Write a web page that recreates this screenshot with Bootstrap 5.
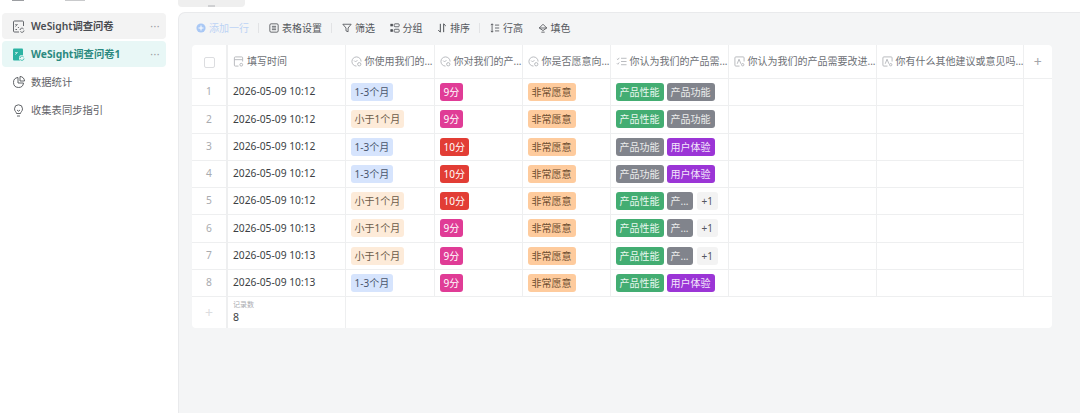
<!DOCTYPE html>
<html lang="zh">

<head>
    <meta charset="UTF-8">
    <meta name="viewport" content="width=device-width, initial-scale=1.0">
    <title>WeSight调查问卷1</title>

    <link href="https://cdn.jsdelivr.net/npm/bootstrap@5.3.0/dist/css/bootstrap.min.css" rel="stylesheet">

    <style>
        html, body {
            height: 413px;
            overflow: hidden;
        }

        body {
            background-color: #fff;
            color: #3c3f44;
            font-family: "Noto Sans", "Noto Sans CJK SC", sans-serif;
            font-size: 10.3px;
        }

        .side-bar {
            width: 178px;
            padding: 0 12px 0 2px;
        }

        .cut-row {
            height: 13px;
            padding-left: 10px;
        }

        .cut-bit {
            height: 1px;
            background-color: #c9cacc;
        }

        .cut-bit.is-icon {
            width: 12px;
            background-color: #9c9ea2;
        }

        .cut-bit.is-text {
            width: 20px;
            margin-left: 41px;
        }

        .side-item {
            height: 26px;
            margin-bottom: 2px;
            padding: 1px 6px 0 10px;
            border-radius: 4px;
            color: #5f6267;
        }

        .side-item svg {
            width: 13px;
            height: 13px;
            margin-right: 6px;
            flex: none;
        }

        .side-item.is-file {
            background-color: #f3f3f3;
            font-weight: 600;
            color: #4a4d52;
        }

        .side-item.is-active {
            background-color: #e8f7f6;
            font-weight: 700;
            color: #2c8a80;
        }

        .side-item .more-dots {
            margin-left: auto;
            color: #9a9da2;
            letter-spacing: .5px;
            font-weight: 400;
            line-height: 1;
        }

        .side-link {
            margin-top: 2px;
        }

        .main-area {
            width: 902px;
        }

        .tab-stub {
            width: 67px;
            height: 7px;
            background-color: #efefef;
            border-radius: 0 0 4px 4px;
        }

        .tab-stub span {
            width: 7px;
            height: 2px;
            background-color: #cfd0d2;
        }

        .sheet-panel {
            margin-top: 5px;
            padding: 0 28px 0 13px;
            height: 401px;
            background-color: #f4f5f6;
            border-top: 1px solid #e9eaec;
            border-left: 1px solid #e9eaec;
            border-top-left-radius: 7px;
        }

        .tool-bar {
            height: 32px;
            padding: 0 0 2px 4px;
            color: #55585d;
            font-size: 10px;
        }

        .tool-item svg {
            width: 10px;
            height: 10px;
            margin-right: 3px;
            flex: none;
        }

        .tool-item + .tool-item {
            margin-left: 14.500px;
        }

        .tool-item.is-add {
            color: #bcd3f5;
        }

        .tool-sep {
            width: 1px;
            height: 10px;
            margin: 0 10px 0 9px;
            background-color: #e2e3e5;
        }

        .grid-box {
            background-color: #fff;
            border-radius: 4px;
            width: 860px;
            overflow: hidden;
        }

        .grid-table {
            table-layout: fixed;
            width: 860px;
            margin: 0;
            border-collapse: collapse;
            font-size: 10.26px;
        }

        .grid-table th,
        .grid-table td {
            padding: 0 5px;
            height: 27.25px;
            border: 1px solid #eeeff0;
            color: #3c3f44;
            font-weight: 400;
            white-space: nowrap;
            overflow: hidden;
            vertical-align: middle;
            box-shadow: none;
        }

        .grid-table th {
            height: 33.5px;
            color: #6d7075;
            font-size: 10px;
        }

        .grid-table tr > :first-child {
            border-left: 0;
            border-right-width: 2px;
            text-align: center;
            color: #a9abaf;
        }

        .grid-table tr:first-child > * {
            border-top: 0;
        }

        .grid-table tr > :last-child {
            border-right: 0;
        }

        .no-line {
            border: 0 !important;
        }

        .head-inner svg {
            width: 11px;
            height: 11px;
            margin-right: 3px;
            flex: none;
        }

        .check-box {
            display: inline-block;
            width: 11px;
            height: 11px;
            border: 1px solid #dcdde0;
            border-radius: 2px;
            vertical-align: middle;
        }

        .add-col {
            text-align: center;
            font-size: 14px !important;
            color: #a4a6aa !important;
        }

        .add-row {
            font-size: 14px;
            color: #dcdde0 !important;
        }

        .tag-pill {
            display: inline-block;
            height: 18px;
            line-height: 18px;
            padding: 0 4px;
            border-radius: 3px;
            margin-right: 3px;
            font-size: 10px;
            vertical-align: middle;
        }

        .tag-blue { background-color: #d6e4fd; color: #49566c; }
        .tag-cream { background-color: #fdebd9; color: #6a5a48; }
        .tag-pink { background-color: #e03c96; color: #fff; }
        .tag-red { background-color: #e23d35; color: #fff; }
        .tag-peach { background-color: #fecb9d; color: #6e4e30; }
        .tag-green { background-color: #43ad72; color: #e9f7ef; }
        .tag-grey { background-color: #81848c; color: #eceded; }
        .tag-purple { background-color: #9b35d6; color: #f3e6fb; }
        .tag-more { background-color: #f3f3f3; color: #55585e; padding: 0 5px; margin-left: 1px; }

        .foot-label {
            font-size: 7px;
            color: #a9abaf;
            line-height: 10px;
        }

        .foot-value {
            font-size: 10.500px;
            line-height: 14px;
        }

        .foot-row td {
            height: 31px;
            border-bottom: 0;
        }
    </style>
</head>

<body>
    <div class="d-flex">
        <!-- left list -->
        <div class="side-bar flex-shrink-0">
            <div class="cut-row d-flex align-items-start">
                <span class="cut-bit is-icon"></span>
                <span class="cut-bit is-text"></span>
            </div>
            <div class="side-item is-file d-flex align-items-center">
                <svg viewBox="0 0 13 13" fill="none" stroke="#55585e" stroke-width=".9"><path d="M11.500 6V2a1 1 0 0 0-1-1h-8a1 1 0 0 0-1 1v9a1 1 0 0 0 1 1H7"/><path d="M3.500 6.500l2-2.500M3.500 4l.8 1M6 7l.8 1M5 9.500H3.500"/><path d="M8 10a2 2 0 0 1 3.600-1M12 10.500a2 2 0 0 1-3.600 1"/></svg>
                <span>WeSight调查问卷</span>
                <span class="more-dots">···</span>
            </div>
            <div class="side-item is-active d-flex align-items-center">
                <svg viewBox="0 0 13 13"><rect x="1" y="0.500" width="10" height="12" rx="1" fill="#2bb3a3"/><path d="M3.500 6.500l2-2.500M3.500 4l.8 1" stroke="#fff" stroke-width=".9" fill="none"/><circle cx="10" cy="10" r="3" fill="#e8f7f6"/><path d="M8 10a2 2 0 0 1 3.600-1M12 10.500a2 2 0 0 1-3.600 1" stroke="#2bb3a3" stroke-width=".9" fill="none"/></svg>
                <span>WeSight调查问卷1</span>
                <span class="more-dots">···</span>
            </div>
            <div class="side-item side-link d-flex align-items-center">
                <svg viewBox="0 0 13 13" fill="none" stroke="#4f5257" stroke-width=".9"><path d="M6 1.500a5 5 0 1 0 5.500 5.500H6z"/><path d="M8 .5a4.500 4.500 0 0 1 4.500 4.500H8z"/></svg>
                <span>数据统计</span>
            </div>
            <div class="side-item d-flex align-items-center">
                <svg viewBox="0 0 13 13" fill="none" stroke="#4f5257" stroke-width=".9"><path d="M4.500 9.500c0-1.500-2-2.200-2-4.700a4 4 0 0 1 8 0c0 2.500-2 3.200-2 4.700z"/><path d="M5 12h3M5 6l1.500 1.200L8 6"/></svg>
                <span>收集表同步指引</span>
            </div>
        </div>

        <!-- sheet -->
        <div class="main-area">
            <div class="tab-stub d-flex justify-content-center align-items-end"><span></span></div>
            <div class="sheet-panel">
                <div class="tool-bar d-flex align-items-center">
                    <div class="tool-item is-add d-flex align-items-center">
                        <svg viewBox="0 0 12 12"><circle cx="6" cy="6" r="5.500" fill="#a9c8f5"/><path d="M6 3v6M3 6h6" stroke="#fff" stroke-width="1.200"/></svg>添加一行
                    </div>
                    <span class="tool-sep"></span>
                    <div class="tool-item d-flex align-items-center">
                        <svg viewBox="0 0 12 12" fill="none" stroke="#4f5257"><rect x="1" y="1" width="10" height="10" rx="1.500"/><path d="M3.500 4h5M3.500 6h5M3.500 8h5"/></svg>表格设置
                    </div>
                    <span class="tool-sep"></span>
                    <div class="tool-item d-flex align-items-center">
                        <svg viewBox="0 0 12 12" fill="none" stroke="#4f5257"><path d="M1 1.500h10L7.300 6v4.500l-2.500-1V6z"/></svg>筛选
                    </div>
                    <div class="tool-item d-flex align-items-center">
                        <svg viewBox="0 0 12 12" fill="none" stroke="#4f5257"><rect x="1" y="1.500" width="2" height="2" fill="#4f5257"/><rect x="1" y="8" width="2" height="2" fill="#4f5257"/><rect x="5" y="1" width="6" height="3.500" rx="1"/><rect x="5" y="7.500" width="6" height="3.500" rx="1"/></svg>分组
                    </div>
                    <div class="tool-item d-flex align-items-center">
                        <svg viewBox="0 0 12 12" fill="none" stroke="#4f5257" stroke-width="1.200"><path d="M4 1v10L1.500 8.500M8 11V1l2.500 2.500"/></svg>排序
                    </div>
                    <span class="tool-sep"></span>
                    <div class="tool-item d-flex align-items-center">
                        <svg viewBox="0 0 12 12" fill="none" stroke="#4f5257"><path d="M2.500 1v10M1 2.500L2.500 1 4 2.500M1 9.500L2.500 11 4 9.500M6 2.500h5M6 6h5M6 9.500h5"/></svg>行高
                    </div>
                    <div class="tool-item d-flex align-items-center">
                        <svg viewBox="0 0 12 12" fill="none" stroke="#4f5257"><path d="M6 1.500L10.500 6 6 9 1.500 6z"/><path d="M1.500 6h9M4 11h4"/></svg>填色
                    </div>
                </div>

                <div class="grid-box">
                    <table class="table grid-table" id="grid">
                        <colgroup>
                            <col style="width:35px"><col style="width:118px"><col style="width:89px"><col style="width:88px"><col style="width:88px"><col style="width:118px"><col style="width:148px"><col style="width:147px"><col style="width:29px">
                        </colgroup>
                        <thead id="gridHead"></thead>
                        <tbody id="gridBody"></tbody>
                    </table>
                </div>
            </div>
        </div>
    </div>

    <script src="https://cdn.jsdelivr.net/npm/bootstrap@5.3.0/dist/js/bootstrap.bundle.min.js"></script>
    <script>
        var ico = {
            date: '<svg viewBox="0 0 12 12" fill="none" stroke="#b4b6ba"><path d="M10.500 6V2a1 1 0 0 0-1-1h-7a1 1 0 0 0-1 1v8a1 1 0 0 0 1 1H6M1.500 4h9"/><circle cx="9" cy="9.500" r="1.500"/></svg>',
            one: '<svg viewBox="0 0 12 12" fill="none" stroke="#b4b6ba"><path d="M11 6a5 5 0 1 0-5 5"/><path d="M3.500 5l1.500 1.500L7 4.500"/><circle cx="9" cy="9" r="1.800"/></svg>',
            many: '<svg viewBox="0 0 12 12" fill="none" stroke="#b4b6ba"><path d="M1 3l1 1 1.500-2M1 8l1 1 1.500-2M5.500 2.500h6M5.500 6h6M5.500 9.500h6"/></svg>',
            text: '<svg viewBox="0 0 12 12" fill="none" stroke="#b4b6ba"><path d="M11 6V2a1 1 0 0 0-1-1H2a1 1 0 0 0-1 1v8a1 1 0 0 0 1 1h4"/><path d="M3.500 8.500L5.500 3.500 7.500 8.500"/><circle cx="9.500" cy="9.500" r="1.300"/></svg>'
        };

        var heads = [
            ['date', '填写时间'],
            ['one', '你使用我们的...'],
            ['one', '你对我们的产...'],
            ['one', '你是否愿意向...'],
            ['many', '你认为我们的产品需...'],
            ['text', '你认为我们的产品需要改进...'],
            ['text', '你有什么其他建议或意见吗...']
        ];

        var tagA = ['产品性能', 'tag-green'];
        var tagB = ['产品功能', 'tag-grey'];
        var tagB2 = ['产...', 'tag-grey'];
        var tagC = ['用户体验', 'tag-purple'];
        var more = ['+1', 'tag-more'];
        var m1 = ['1-3个月', 'tag-blue'];
        var m2 = ['小于1个月', 'tag-cream'];
        var s9 = ['9分', 'tag-pink'];
        var s10 = ['10分', 'tag-red'];

        var rows = [
            ['10:12', m1, s9, [tagA, tagB]],
            ['10:12', m2, s9, [tagA, tagB]],
            ['10:12', m1, s10, [tagB, tagC]],
            ['10:12', m1, s10, [tagB, tagC]],
            ['10:12', m2, s10, [tagA, tagB2, more]],
            ['10:13', m2, s9, [tagA, tagB2, more]],
            ['10:13', m2, s9, [tagA, tagB2, more]],
            ['10:13', m1, s9, [tagA, tagC]]
        ];

        function tag(t) {
            return '<span class="tag-pill ' + t[1] + '">' + t[0] + '</span>';
        }

        var headHtml = '<tr><th><span class="check-box"></span></th>';
        heads.forEach(function (h) {
            headHtml += '<th><div class="head-inner d-flex align-items-center">' + ico[h[0]] + '<span>' + h[1] + '</span></div></th>';
        });
        headHtml += '<th class="add-col">+</th></tr>';
        document.getElementById('gridHead').innerHTML = headHtml;

        var bodyHtml = '';
        rows.forEach(function (r, i) {
            bodyHtml += '<tr><td>' + (i + 1) + '</td><td>2026-05-09 ' + r[0] + '</td><td>' + tag(r[1]) + '</td><td>' + tag(r[2]) + '</td><td>' + tag(['非常愿意', 'tag-peach']) + '</td><td>' + r[3].map(tag).join('') + '</td><td></td><td></td><td class="no-line"></td></tr>';
        });
        bodyHtml += '<tr class="foot-row"><td class="add-row">+</td><td><div class="foot-label">记录数</div><div class="foot-value">8</div></td><td colspan="7"></td></tr>';
        document.getElementById('gridBody').innerHTML = bodyHtml;
    </script>
</body>

</html>
